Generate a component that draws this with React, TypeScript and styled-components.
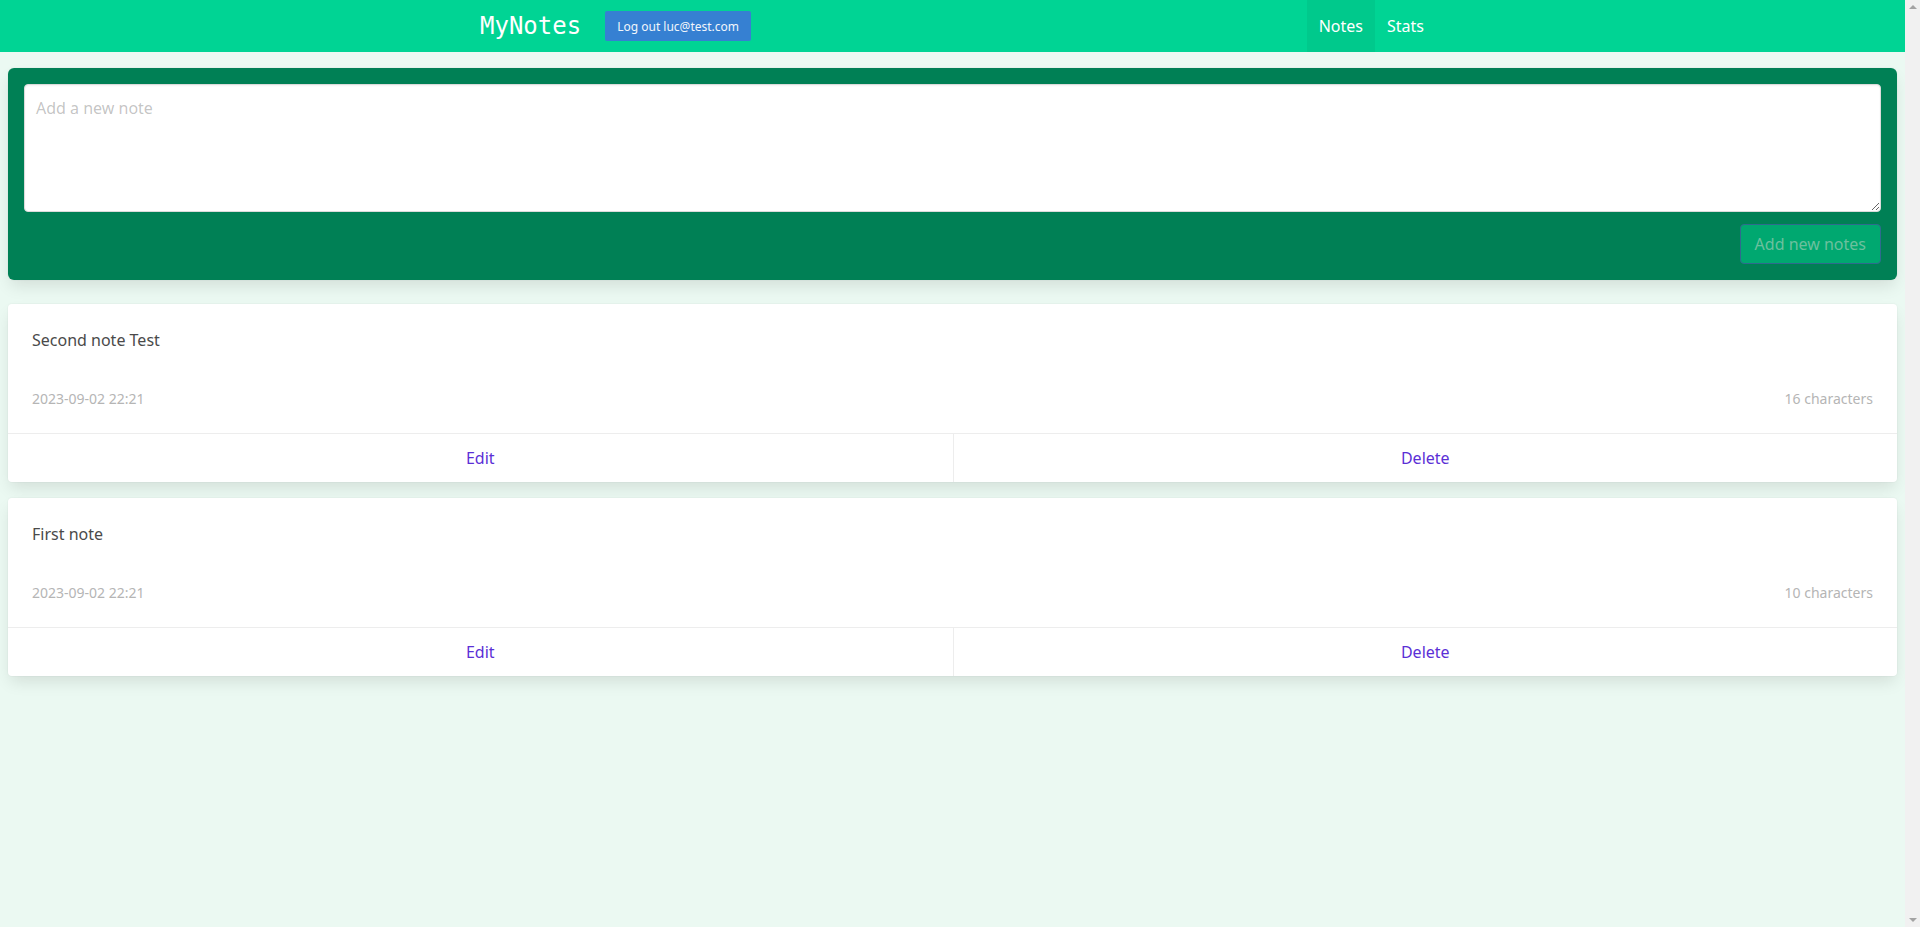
import React from "react";
import styled, { createGlobalStyle } from "styled-components";

const GlobalStyle = createGlobalStyle`
  html, body {
    margin: 0;
    height: 100%;
    overflow: hidden;
    background: #ebf9f2;
  }
  body {
    font-family: "Noto Sans", "Open Sans", sans-serif;
    color: #4a4a4a;
    font-size: 16px;
    line-height: 1.5;
  }
  #root { height: 100%; }
  * { box-sizing: border-box; }
`;

const Viewport = styled.div`
  display: flex;
  height: 100%;
`;

const Page = styled.div`
  flex: 1;
  min-width: 0;
  background: #ebf9f2;
`;

const Scrollbar = styled.div`
  width: 15px;
  flex: none;
  background: #f1f1f1;
  display: flex;
  flex-direction: column;
  justify-content: space-between;
  align-items: center;
  padding: 5px 0;
`;

const Arrow = styled.span<{ $down?: boolean }>`
  width: 0;
  height: 0;
  border-left: 4px solid transparent;
  border-right: 4px solid transparent;
  ${(p) =>
    p.$down
      ? "border-top: 4px solid #a3a3a3;"
      : "border-bottom: 4px solid #a3a3a3;"}
`;

const Navbar = styled.nav`
  height: 52px;
  background: #00d494;
  display: flex;
  align-items: stretch;
  padding-left: 468px;
`;

const NavInner = styled.div`
  width: 968px;
  display: flex;
  align-items: stretch;
`;

const Brand = styled.div`
  display: flex;
  align-items: center;
  gap: 24px;
  padding-left: 12px;
`;

const Logo = styled.span`
  font-family: "DejaVu Sans Mono", "Liberation Mono", monospace;
  font-size: 24px;
  color: #ffffff;
  line-height: 1;
`;

const LogoutButton = styled.button`
  height: 30px;
  padding: 0 12px;
  border: none;
  border-radius: 2px;
  background: #3680d2;
  color: #f2f6fb;
  font-family: "Noto Sans", "Open Sans", sans-serif;
  font-size: 12px;
  cursor: pointer;
`;

const Menu = styled.div`
  margin-left: auto;
  display: flex;
  align-items: stretch;
`;

const MenuItem = styled.a<{ $active?: boolean }>`
  display: flex;
  align-items: center;
  padding: 0 12px;
  color: #ffffff;
  font-size: 16px;
  text-decoration: none;
  background: ${(p) => (p.$active ? "#00c98c" : "transparent")};
  cursor: pointer;
`;

const Main = styled.main`
  padding: 16px 8px;
  display: flex;
  flex-direction: column;
`;

const shadow = `0 0.5em 1em -0.125em rgba(10, 10, 10, 0.1), 0 0 0 1px rgba(10, 10, 10, 0.02)`;

const FormBox = styled.form`
  background: #008055;
  border-radius: 6px;
  box-shadow: ${shadow};
  padding: 16px;
  display: flex;
  flex-direction: column;
  gap: 12px;
  margin-bottom: 24px;
`;

const TextArea = styled.textarea`
  display: block;
  width: 100%;
  height: 128px;
  border: 1px solid #dbdbdb;
  border-radius: 4px;
  padding: 11px;
  font-family: "Noto Sans", "Open Sans", sans-serif;
  font-size: 16px;
  line-height: 1.5;
  color: #363636;
  background: #ffffff;
  box-shadow: inset 0 0.0625em 0.125em rgba(10, 10, 10, 0.05);
  outline: none;
  &::placeholder {
    color: rgba(54, 54, 54, 0.3);
  }
`;

const FormActions = styled.div`
  display: flex;
  justify-content: flex-end;
`;

const SubmitButton = styled.button`
  height: 40px;
  padding: 0 14px;
  border: 1px solid #2f6a8e;
  border-radius: 4px;
  background: #00a870;
  color: #6cc09e;
  font-family: "Noto Sans", "Open Sans", sans-serif;
  font-size: 16px;
  cursor: not-allowed;
`;

const CardList = styled.div`
  display: flex;
  flex-direction: column;
  gap: 16px;
`;

const Card = styled.div`
  background: #ffffff;
  border-radius: 4px;
  box-shadow: ${shadow};
`;

const CardContent = styled.div`
  padding: 24px;
`;

const NoteText = styled.p`
  margin: 0 0 36px;
  font-size: 16px;
  line-height: 24px;
  color: #4a4a4a;
`;

const Meta = styled.div`
  display: flex;
  justify-content: space-between;
  font-size: 14px;
  line-height: 21px;
  color: #b5b5b5;
`;

const CardFooter = styled.footer`
  display: grid;
  grid-template-columns: 1fr 1fr;
  border-top: 1px solid #ededed;
`;

const FooterItem = styled.a`
  display: flex;
  justify-content: center;
  align-items: center;
  padding: 12px;
  line-height: 24px;
  font-size: 16px;
  color: #5b30d6;
  cursor: pointer;
  & + & {
    border-left: 1px solid #ededed;
  }
`;

const notes = [
  { text: "Second note Test", date: "2023-09-02 22:21" },
  { text: "First note", date: "2023-09-02 22:21" },
];

export default function App() {
  return (
    <>
      <GlobalStyle />
      <Viewport>
        <Page>
          <Navbar>
            <NavInner>
              <Brand>
                <Logo>MyNotes</Logo>
                <LogoutButton>Log out luc@test.com</LogoutButton>
              </Brand>
              <Menu>
                <MenuItem $active>Notes</MenuItem>
                <MenuItem>Stats</MenuItem>
              </Menu>
            </NavInner>
          </Navbar>
          <Main>
            <FormBox onSubmit={(e) => e.preventDefault()}>
              <TextArea placeholder="Add a new note" />
              <FormActions>
                <SubmitButton type="submit" disabled>
                  Add new notes
                </SubmitButton>
              </FormActions>
            </FormBox>
            <CardList>
              {notes.map((n, i) => (
                <Card key={i}>
                  <CardContent>
                    <NoteText>{n.text}</NoteText>
                    <Meta>
                      <span>{n.date}</span>
                      <span>{n.text.length} characters</span>
                    </Meta>
                  </CardContent>
                  <CardFooter>
                    <FooterItem>Edit</FooterItem>
                    <FooterItem>Delete</FooterItem>
                  </CardFooter>
                </Card>
              ))}
            </CardList>
          </Main>
        </Page>
        <Scrollbar>
          <Arrow />
          <Arrow $down />
        </Scrollbar>
      </Viewport>
    </>
  );
}
